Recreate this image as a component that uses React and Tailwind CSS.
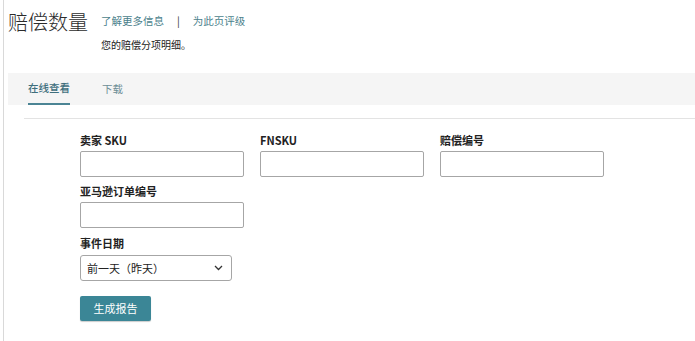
const font = { fontFamily: '"Noto Sans CJK SC", "Noto Sans", sans-serif' };

function Field({ label, className = '' }) {
  return (
    <div className={`flex flex-col ${className}`}>
      <label className="text-[11px] font-bold text-[#222] leading-[16px] mb-[3px]">{label}</label>
      <input className="w-[164px] h-[26px] border border-[#a6a6a6] rounded-[2px] bg-white outline-none" />
    </div>
  );
}

export default function App() {
  return (
    <div className="w-[695px] h-[341px] bg-white overflow-hidden" style={font}>
      <div className="ml-[3px] h-full border-l border-[#d9d9d9]">
        {/* header */}
        <div className="flex pl-[4px] pt-[8px]">
          <h1 className="shrink-0 text-[20px] leading-[28px] font-light text-[#2b2b2b] w-[93px]">赔偿数量</h1>
          <div className="pt-[5px]">
            <div className="flex items-center text-[10.5px] leading-[16px] text-[#4b7f8c]">
              <span>了解更多信息</span>
              <span className="mx-[13px] text-[#333]">|</span>
              <span>为此页评级</span>
            </div>
            <p className="mt-[9px] text-[10px] leading-[14px] text-[#222]">您的赔偿分项明细。</p>
          </div>
        </div>

        {/* tabs */}
        <div className="ml-[4px] mt-[21px] h-[32px] bg-[#f5f5f5] flex items-end pl-[20px] gap-[32px]">
          <div className="h-full flex items-center border-b-2 border-[#4b8494] text-[10.5px] text-[#3f6f7d] font-medium">
            在线查看
          </div>
          <div className="h-full flex items-center text-[10.5px] text-[#6d8d96]">下载</div>
        </div>
        <div className="ml-[20px] mt-[13px] border-t border-[#e3e3e3]" />

        {/* form */}
        <div className="pl-[76px] pt-[13px]">
          <div className="flex gap-[16px]">
            <Field label="卖家 SKU" />
            <Field label="FNSKU" />
            <Field label="赔偿编号" />
          </div>
          <Field label="亚马逊订单编号" className="mt-[6px]" />
          <div className="flex flex-col mt-[7px]">
            <label className="text-[11px] font-bold text-[#222] leading-[16px] mb-[4px]">事件日期</label>
            <div className="w-[152px] h-[26px] border border-[#a6a6a6] rounded-[3px] flex items-center justify-between pl-[6px] pr-[8px] text-[11px] text-[#222]">
              <span>前一天（昨天）</span>
              <svg width="9" height="6" viewBox="0 0 9 6" fill="none" stroke="#333" strokeWidth="1.3">
                <path d="M1 1l3.5 3.5L8 1" />
              </svg>
            </div>
          </div>
          <button className="mt-[15px] w-[71px] h-[25px] bg-[#3b8696] text-white text-[11px] rounded-[2px] shadow-[0_1px_1px_rgba(0,0,0,0.2)]">
            生成报告
          </button>
        </div>
      </div>
    </div>
  );
}
